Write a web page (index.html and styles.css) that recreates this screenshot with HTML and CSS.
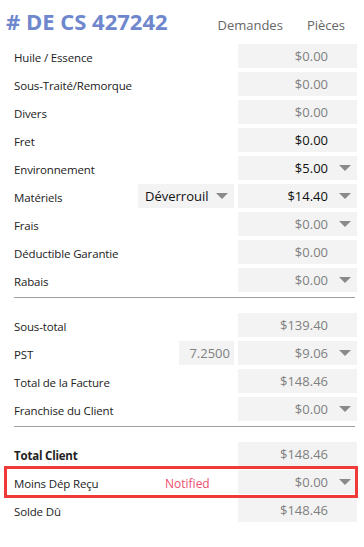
FILE: index.html
```html
<!DOCTYPE html>
<html lang="fr">
<head>
<meta charset="utf-8">
<link rel="stylesheet" href="styles.css">
</head>
<body>
<div class="page">
  <header class="head">
    <h1 class="title"># DE CS 427242</h1>
    <nav class="tabs"><span class="tab">Demandes</span><span class="tab">Pièces</span></nav>
  </header>

  <section class="group">
    <div class="row"><span class="label">Huile / Essence</span><div class="val"><span class="amt">$0.00</span><span class="slot"></span></div></div>
    <div class="row"><span class="label">Sous-Traité/Remorque</span><div class="val"><span class="amt">$0.00</span><span class="slot"></span></div></div>
    <div class="row"><span class="label">Divers</span><div class="val"><span class="amt">$0.00</span><span class="slot"></span></div></div>
    <div class="row"><span class="label">Fret</span><div class="val"><span class="amt dark">$0.00</span><span class="slot"></span></div></div>
    <div class="row"><span class="label">Environnement</span><div class="val"><span class="amt dark">$5.00</span><span class="slot"><i class="caret"></i></span></div></div>
    <div class="row"><span class="label">Matériels</span><div class="mid select"><span>Déverrouil</span><i class="caret"></i></div><div class="val"><span class="amt dark">$14.40</span><span class="slot"><i class="caret"></i></span></div></div>
    <div class="row"><span class="label">Frais</span><div class="val"><span class="amt">$0.00</span><span class="slot"><i class="caret"></i></span></div></div>
    <div class="row"><span class="label">Déductible Garantie</span><div class="val"><span class="amt">$0.00</span><span class="slot"></span></div></div>
    <div class="row"><span class="label">Rabais</span><div class="val"><span class="amt">$0.00</span><span class="slot"><i class="caret"></i></span></div></div>
  </section>

  <hr class="sep">

  <section class="group">
    <div class="row"><span class="label">Sous-total</span><div class="val"><span class="amt">$139.40</span><span class="slot"></span></div></div>
    <div class="row"><span class="label">PST</span><div class="mid rate">7.2500</div><div class="val"><span class="amt">$9.06</span><span class="slot"><i class="caret"></i></span></div></div>
    <div class="row"><span class="label">Total de la Facture</span><div class="val"><span class="amt">$148.46</span><span class="slot"></span></div></div>
    <div class="row"><span class="label">Franchise du Client</span><div class="val"><span class="amt">$0.00</span><span class="slot"><i class="caret"></i></span></div></div>
  </section>

  <hr class="sep">

  <section class="group">
    <div class="row"><span class="label bold">Total Client</span><div class="val"><span class="amt">$148.46</span><span class="slot"></span></div></div>
    <div class="row hl"><span class="label wide">Moins Dép Reçu</span><span class="notified">Notified</span><div class="val"><span class="amt">$0.00</span><span class="slot"><i class="caret"></i></span></div></div>
    <div class="row"><span class="label">Solde Dû</span><div class="val"><span class="amt">$148.46</span><span class="slot"></span></div></div>
  </section>
</div>
</body>
</html>
```
FILE: styles.css
```css
html, body {
  margin: 0;
  padding: 0;
  background: #fff;
}
body {
  font-family: "Open Sans", "Noto Sans", sans-serif;
  font-size: 12px;
  color: #222;
}
.page {
  width: 364px;
  padding: 0 7px 0 14px;
  box-sizing: border-box;
}
.head {
  display: flex;
  align-items: baseline;
  height: 44px;
  margin-left: -8px;
}
.title {
  margin: 0;
  padding-top: 7px;
  font-size: 22px;
  line-height: 28px;
  font-weight: 700;
  color: #6f87cc;
  flex: 1;
}
.tabs {
  display: flex;
  gap: 24px;
  font-size: 13px;
  color: #666;
  margin-right: 12px;
}
.group {
  display: flex;
  flex-direction: column;
  gap: 4px;
}
.row {
  display: flex;
  align-items: center;
  height: 24px;
}
.label {
  flex: 1;
  padding-top: 3px;
  white-space: nowrap;
  font-size: 11.5px;
  letter-spacing: -0.15px;
}
.label.bold {
  font-weight: 700;
  letter-spacing: -0.2px;
}
.label.wide {
  flex: 0 0 151px;
}
.notified {
  flex: 1;
  color: #f0506e;
  font-size: 12px;
  padding-top: 3px;
}
.val {
  width: 119px;
  height: 24px;
  background: #f3f3f3;
  display: flex;
  align-items: center;
  justify-content: flex-end;
  margin-left: 4px;
}
.amt {
  color: #808080;
  font-size: 13px;
}
.amt.dark {
  color: #111;
}
.slot {
  width: 12px;
  margin: 0 6px 0 11px;
  display: flex;
  justify-content: center;
}
.caret {
  display: block;
  width: 0;
  height: 0;
  border-left: 6px solid transparent;
  border-right: 6px solid transparent;
  border-top: 6px solid #8a8a8a;
}
.mid {
  height: 24px;
  background: #f3f3f3;
  display: flex;
  align-items: center;
  box-sizing: border-box;
}
.select {
  width: 96px;
  padding: 0 6px 0 7px;
  justify-content: space-between;
  font-size: 13px;
  color: #111;
}
.rate {
  width: 55px;
  justify-content: flex-end;
  padding-right: 4px;
  font-size: 13px;
  color: #808080;
}
.sep {
  margin: 5px 2px 15px 0;
  border: 0;
  border-top: 1px solid #a0a0a0;
  height: 0;
}
.hl {
  position: relative;
}
.hl::after {
  content: "";
  position: absolute;
  top: -4px;
  bottom: -4px;
  left: -10px;
  right: -1px;
  border: 3px solid #f03a3a;
  pointer-events: none;
}
```
